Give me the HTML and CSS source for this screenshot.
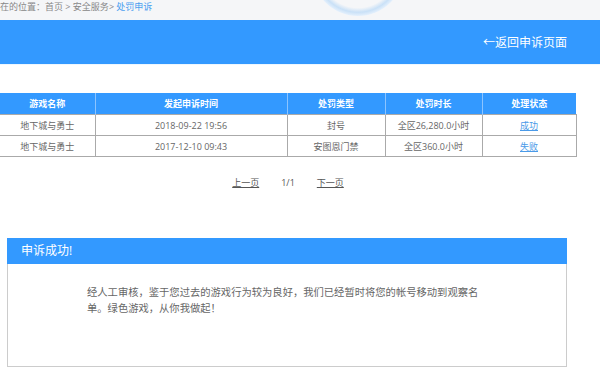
FILE: index.html
```html
<!DOCTYPE html>
<html>
<head>
  <title>处罚申诉</title>
  <meta charset="utf-8">
  <meta name="viewport" content="width=device-width, initial-scale=1.0">
  <link rel="stylesheet" href="styles.css">
</head>
<body>
  <div class="topbar">
    <div class="crumbs">
      在的位置：<a href="#">首页</a> &gt; <a href="#">安全服务</a>&gt; <span class="current">处罚申诉</span>
    </div>
    <div class="glow"></div>
  </div>

  <div class="banner">
    <a class="back" href="#">&larr;返回申诉页面</a>
  </div>

  <div class="content">
    <table class="records">
      <colgroup>
        <col style="width: 95px">
        <col style="width: 192px">
        <col style="width: 98px">
        <col style="width: 97px">
        <col style="width: 94px">
      </colgroup>
      <thead>
        <tr>
          <th>游戏名称</th>
          <th>发起申诉时间</th>
          <th>处罚类型</th>
          <th>处罚时长</th>
          <th>处理状态</th>
        </tr>
      </thead>
      <tbody>
        <tr>
          <td>地下城与勇士</td>
          <td>2018-09-22 19:56</td>
          <td>封号</td>
          <td>全区26,280.0小时</td>
          <td><a href="#">成功</a></td>
        </tr>
        <tr>
          <td>地下城与勇士</td>
          <td>2017-12-10 09:43</td>
          <td>安图恩门禁</td>
          <td>全区360.0小时</td>
          <td><a href="#">失败</a></td>
        </tr>
      </tbody>
    </table>

    <div class="pager">
      <a href="#">上一页</a>
      <span>1/1</span>
      <a href="#">下一页</a>
    </div>
  </div>

  <div class="panel">
    <div class="panel-head">申诉成功!</div>
    <div class="panel-body">
      <p>经人工审核，鉴于您过去的游戏行为较为良好，我们已经暂时将您的帐号移动到观察名单。绿色游戏，从你我做起！</p>
    </div>
  </div>
</body>
</html>
```

FILE: styles.css
```css
body {
  font-family: "Open Sans", "Noto Sans CJK SC", sans-serif;
  margin: 0;
  background: #fff;
  color: #666;
  overflow: hidden;
}

a {
  color: inherit;
}

.topbar {
  position: relative;
  height: 20px;
  background: #f5f6f8;
  overflow: hidden;
}

.crumbs {
  position: relative;
  z-index: 1;
  font-size: 9px;
  line-height: 13px;
  color: #888;
  white-space: nowrap;
}

.crumbs a {
  text-decoration: none;
  color: #888;
}

.crumbs .current {
  color: #4a9ff0;
}

/* faint ring from the header artwork */
.glow {
  position: absolute;
  left: 312px;
  top: -76px;
  width: 92px;
  height: 92px;
  border-radius: 50%;
  background: radial-gradient(circle, rgba(255,255,255,0) 58%, rgba(120,185,245,0.35) 65%, rgba(240,247,255,0.95) 73%, rgba(215,233,252,0.6) 86%, rgba(245,246,248,0) 100%);
}

.banner {
  height: 44px;
  background: #3399ff;
  display: flex;
  align-items: center;
  justify-content: flex-end;
  padding-right: 33px;
  border-bottom: 1px solid #eef7ff;
}

.back {
  color: #fff;
  text-decoration: none;
  font-size: 12px;
}

.content {
  width: 576px;
  padding-top: 28px;
}

.records {
  width: 576px;
  table-layout: fixed;
  border-collapse: collapse;
  font-size: 9px;
  text-align: center;
}

.records th {
  height: 21px;
  padding: 0;
  background: #3399ff;
  color: #fff;
  font-weight: bold;
  border-left: 1px solid #8cc4ff;
}

.records th:first-child {
  border-left: none;
}

.records td {
  height: 20px;
  padding: 0;
  border: 1px solid #aaa;
  color: #666;
}

.records td:first-child {
  border-left: none;
}

.records td a {
  color: #4a9ae8;
}

.pager {
  display: flex;
  justify-content: center;
  gap: 22px;
  margin-top: 18px;
  font-size: 9px;
  line-height: 16px;
  color: #555;
}

.pager a {
  color: #555;
}

.panel {
  width: 560px;
  margin: 47px 0 0 7px;
}

.panel-head {
  height: 26px;
  line-height: 26px;
  background: #3399ff;
  color: #fff;
  font-size: 12px;
  padding-left: 14px;
}

.panel-body {
  height: 103px;
  border: 1px solid #ccc;
  border-top: none;
  box-sizing: border-box;
  padding: 20px 0 0 79px;
}

.panel-body p {
  margin: 0;
  width: 398px;
  font-size: 10.3px;
  line-height: 16px;
  color: #666;
}
```
